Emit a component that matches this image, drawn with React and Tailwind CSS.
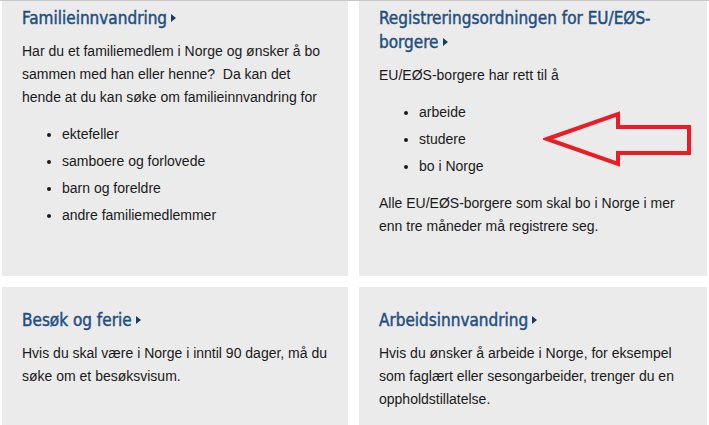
const headingFont = {
  fontFamily: '"DejaVu Sans Condensed", "Liberation Sans Narrow", Roboto, sans-serif',
};

const Caret = () => (
  <svg className="inline-block ml-[4px] mb-[3px]" width="5" height="8" viewBox="0 0 5 8">
    <path d="M0 0 L5 4 L0 8 Z" fill="#1a3b66" />
  </svg>
);

const Card = ({ title, top, children }) => (
  <div className={`bg-[#ebebeb] px-5 pb-6 ${top ? 'pt-[5px]' : 'pt-[21px]'}`}>
    <h2
      className="text-[17px] leading-[24px] font-normal text-[#1f4f80] mb-[10px] [-webkit-text-stroke:0.45px_#1f4f80]"
      style={headingFont}
    >
      {title}
      <Caret />
    </h2>
    <div className="text-[14px] leading-[23px] text-[#1a1a1a] font-['Liberation_Sans',Arial,sans-serif]">
      {children}
    </div>
  </div>
);

const List = ({ items }) => (
  <ul className="list-disc pl-10 mb-[14px] flex flex-col gap-[4px]">
    {items.map((i) => (
      <li key={i}>{i}</li>
    ))}
  </ul>
);

export default function App() {
  return (
    <div className="relative h-[425px] overflow-hidden bg-white border-t border-[#c8c8c8]">
      <div className="grid grid-cols-[346px_348px] gap-[11px] px-[2px]">
        <Card title="Familieinnvandring" top>
          <p className="mb-[14px]">
            Har du et familiemedlem i Norge og ønsker å bo sammen med han eller henne?{'\u00a0'} Da kan det hende at du kan søke om familieinnvandring for
          </p>
          <List items={['ektefeller', 'samboere og forlovede', 'barn og foreldre', 'andre familiemedlemmer']} />
        </Card>
        <Card title="Registreringsordningen for EU/EØS-borgere" top>
          <p className="mb-[14px]">EU/EØS-borgere har rett til å</p>
          <List items={['arbeide', 'studere', 'bo i Norge']} />
          <p className="mb-[14px]">
            Alle EU/EØS-borgere som skal bo i Norge i mer enn tre måneder må registrere seg.
          </p>
        </Card>
        <Card title="Besøk og ferie">
          <p className="mb-[14px]">
            Hvis du skal være i Norge i inntil 90 dager, må du søke om et besøksvisum.
          </p>
        </Card>
        <Card title="Arbeidsinnvandring">
          <p className="mb-[14px]">
            Hvis du ønsker å arbeide i Norge, for eksempel som faglært eller sesongarbeider, trenger du en oppholdstillatelse.
          </p>
        </Card>
      </div>

      {/* red annotation arrow */}
      <svg className="absolute left-[543px] top-[109px]" width="150" height="58" viewBox="0 0 150 58">
        <polygon
          points="4,29 75,4 75,17 146,17 146,43 75,43 75,54"
          fill="none"
          stroke="#ed1c24"
          strokeWidth="4"
          strokeLinejoin="miter"
        />
      </svg>
    </div>
  );
}
